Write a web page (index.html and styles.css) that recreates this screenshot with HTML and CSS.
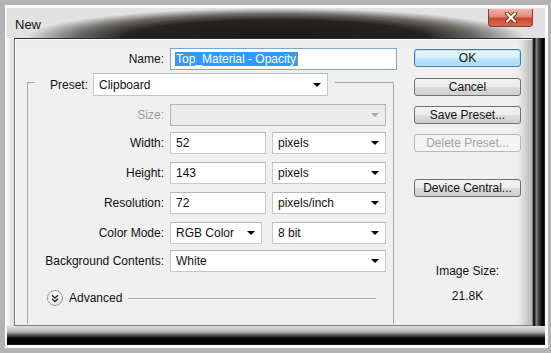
FILE: index.html
```html
<!DOCTYPE html>
<html>
<head>
  <title>New</title>
  <link rel="stylesheet" href="styles.css">
</head>
<body>
  <div class="screen">
    <div class="frame">
      <div class="titlebar">
        <span class="title">New</span>
        <span class="close">
          <svg width="14" height="11" viewBox="0 0 14 11">
            <path d="M3 1.5 L11 9.5 M11 1.5 L3 9.5" stroke="#7a2a1c" stroke-width="4" stroke-linecap="round"/>
            <path d="M3 1.5 L11 9.5 M11 1.5 L3 9.5" stroke="#fff" stroke-width="2.2" stroke-linecap="round"/>
          </svg>
        </span>
      </div>

      <div class="middle">
        <div class="edge-left"></div>
        <div class="client">
          <div class="form">
            <div class="row name-row">
              <label class="lbl">Name:</label>
              <div class="field focus"><span class="sel">Top_Material - Opacity</span><span class="caret"></span></div>
            </div>

            <div class="group">
              <div class="group-head">
                <span class="stub"></span>
                <label class="lbl-preset">Preset:</label>
                <div class="field combo preset">Clipboard<i class="arrow"></i></div>
                <span class="rule-fill"></span>
              </div>
              <div class="group-body">
                <div class="row">
                  <label class="lbl disabled">Size:</label>
                  <div class="field combo wide off"><span></span><i class="arrow"></i></div>
                </div>
                <div class="row tight">
                  <label class="lbl">Width:</label>
                  <div class="field num">52</div>
                  <div class="field combo unit">pixels<i class="arrow"></i></div>
                </div>
                <div class="row">
                  <label class="lbl">Height:</label>
                  <div class="field num">143</div>
                  <div class="field combo unit">pixels<i class="arrow"></i></div>
                </div>
                <div class="row">
                  <label class="lbl">Resolution:</label>
                  <div class="field num">72</div>
                  <div class="field combo unit">pixels/inch<i class="arrow"></i></div>
                </div>
                <div class="row">
                  <label class="lbl">Color Mode:</label>
                  <div class="field combo mode">RGB Color<i class="arrow"></i></div>
                  <div class="field combo unit">8 bit<i class="arrow"></i></div>
                </div>
                <div class="row tight">
                  <label class="lbl">Background Contents:</label>
                  <div class="field combo wide">White<i class="arrow"></i></div>
                </div>
                <div class="advanced">
                  <span class="adv-icon">
                    <svg width="8" height="9" viewBox="0 0 8 9">
                      <path d="M1 1.2 L4 4 L7 1.2 M1 4.8 L4 7.6 L7 4.8" fill="none" stroke="#222" stroke-width="1.3"/>
                    </svg>
                  </span>
                  <span class="adv-text">Advanced</span>
                  <span class="adv-line"></span>
                </div>
              </div>
            </div>
          </div>

          <div class="side">
            <div class="btn default">OK</div>
            <div class="btn">Cancel</div>
            <div class="btn">Save Preset...</div>
            <div class="btn disabled">Delete Preset...</div>
            <div class="btn device">Device Central...</div>
            <div class="size-label">Image Size:</div>
            <div class="size-value">21.8K</div>
          </div>
        </div>
        <div class="edge-right"></div>
      </div>

      <div class="edge-bottom"></div>
    </div>
  </div>
</body>
</html>
```

FILE: styles.css
```css
body { margin: 0; background: #b4b4b4; font-family: "Liberation Sans", Arial, sans-serif; font-size: 12px; color: #000; }

.screen { width: 551px; height: 353px; box-sizing: border-box; padding: 5px 3px 5px 5px; }
.frame { height: 100%; box-sizing: border-box; border-style: solid; border-color: #fafafa; border-width: 3px 3px 3px 2px; display: flex; flex-direction: column; }

/* title bar with the blurred dark shadow */
.titlebar { height: 30px; flex: none; display: flex; align-items: center; padding-left: 8px;
  background-color: #e2e2e2;
  background-image: radial-gradient(ellipse 250px 30px at 50% 100%, #1c1916 0%, #26231f 60%, #6d6a66 80%, rgba(226,226,226,0) 100%); }
.title { font-size: 13px; color: #111; margin-top: 2px; }
.close { margin-left: auto; margin-right: 12px; align-self: flex-start; margin-top: 1px; width: 45px; height: 18px; box-sizing: border-box;
  border: 1px solid #8c3b2c; border-top: none; border-radius: 0 0 4px 4px;
  background: linear-gradient(#eeb3a6 0%, #e08a78 45%, #c9472f 55%, #d76a50 100%);
  display: flex; align-items: center; justify-content: center; }

.middle { flex: 1; display: flex; }
.edge-left { width: 7px; background: linear-gradient(to right, #f6f6f6, #dcdcdc); }
.edge-right { width: 12px; background: linear-gradient(to right, #1a1a1a 0, #1a1a1a 2px, #8c8c8c 3px, #3a3a3a 6px, #0a0a0a 9px, #000 11px, #444 12px); }
.edge-bottom { height: 19px; flex: none; background: linear-gradient(to bottom, #e2e2e2 0, #b4b4b4 6px, #5a5a5a 9px, #0a0a0a 12px, #000 18px, #2a2a2a 19px); }

.client { width: 519px; box-sizing: border-box; border: 1px solid #7c7c7c; border-top-color: #2c2c2c; background: #f0f0f0;
  box-shadow: inset 1px 1px 0 #fff, inset -14px 0 12px -8px rgba(0,0,0,0.28);
  display: grid; grid-template-columns: 385px 107px; column-gap: 14px; align-items: start; }

/* form column */
.row { display: flex; align-items: center; gap: 6px; height: 22px; }
.row.tight { margin-top: -2px; }
.lbl { text-align: right; flex: none; color: #111; }
.lbl.disabled { color: #9a9a9a; }
.name-row { margin-top: 9px; }
.name-row .lbl { width: 149px; }

.field { height: 22px; box-sizing: border-box; border: 1px solid #c6c6c6; border-top-color: #b8b8b8; background: #fff;
  display: flex; align-items: center; padding: 0 6px 0 5px; color: #111; flex: none; }
.focus { width: 227px; border-color: #7fa6cf; padding-left: 4px; }
.sel { background: #3399ff; color: #fff; padding: 0 1px; line-height: 14px; }
.caret { width: 1px; height: 14px; background: #d8742c; }

.combo { justify-content: space-between; }
.arrow { width: 0; height: 0; border-left: 4px solid transparent; border-right: 4px solid transparent; border-top: 4px solid #000; }
.preset { width: 235px; height: 23px; }
.wide { width: 216px; }
.num { width: 96px; }
.unit { width: 114px; }
.mode { width: 92px; }
.row .mode + .unit { margin-left: 4px; }
.off { background: #ececec; border-color: #b4b4b4; }
.off .arrow { border-top-color: #a8a8a8; }

/* preset group box */
.group { margin: 3px 0 0 12px; width: 367px; }
.group-head { display: flex; height: 23px; }
.stub { width: 7px; height: 14px; margin-top: 9px; border-top: 1px solid #a8a8a8; border-left: 1px solid #a8a8a8; flex: none; }
.lbl-preset { margin: 0 5px 0 15px; align-self: center; color: #111; }
.rule-fill { flex: 1; height: 14px; margin: 9px 0 0 7px; border-top: 1px solid #a8a8a8; border-right: 1px solid #a8a8a8; }
.group-body { border-left: 1px solid #a8a8a8; border-right: 1px solid #a8a8a8; padding-top: 8px; height: 220px; display: flex; flex-direction: column; gap: 8px; }
.group-body .lbl { width: 136px; }

.advanced { display: flex; align-items: center; margin-top: 10px; padding-left: 19px; }
.adv-icon { width: 16px; height: 16px; box-sizing: border-box; border: 1px solid #9c9c9c; border-radius: 50%;
  background: radial-gradient(circle at 40% 35%, #fff 0%, #f4f4f4 50%, #d6d6d6 100%);
  display: flex; align-items: center; justify-content: center; }
.adv-text { margin-left: 6px; color: #111; }
.adv-line { flex: 1; margin: 1px 17px 0 6px; height: 0; border-top: 1px solid #a6a6a6; border-bottom: 1px solid #fff; }

/* button column */
.side { display: flex; flex-direction: column; padding-top: 10px; }
.btn { height: 18px; box-sizing: border-box; border: 1px solid #707070; border-radius: 3px; text-align: center; line-height: 16px; color: #111;
  background: linear-gradient(#f3f3f3 0%, #ebebeb 50%, #dddddd 50%, #cfcfcf 100%); margin-bottom: 10px; }
.btn.default { border-color: #3c7fb1; background: linear-gradient(#eaf6fd 0%, #d9f0fc 50%, #bee6fd 50%, #a7d9f5 100%); box-shadow: inset 0 0 0 1px #b6e0f8; margin-bottom: 11px; }
.btn.disabled { border-color: #b5b9bc; background: #f4f4f4; color: #a3a3a3; }
.btn.device { margin-top: 17px; }
.size-label { margin-top: 57px; text-align: center; line-height: 14px; color: #111; }
.size-value { margin-top: 11px; text-align: center; line-height: 14px; color: #111; }
```
